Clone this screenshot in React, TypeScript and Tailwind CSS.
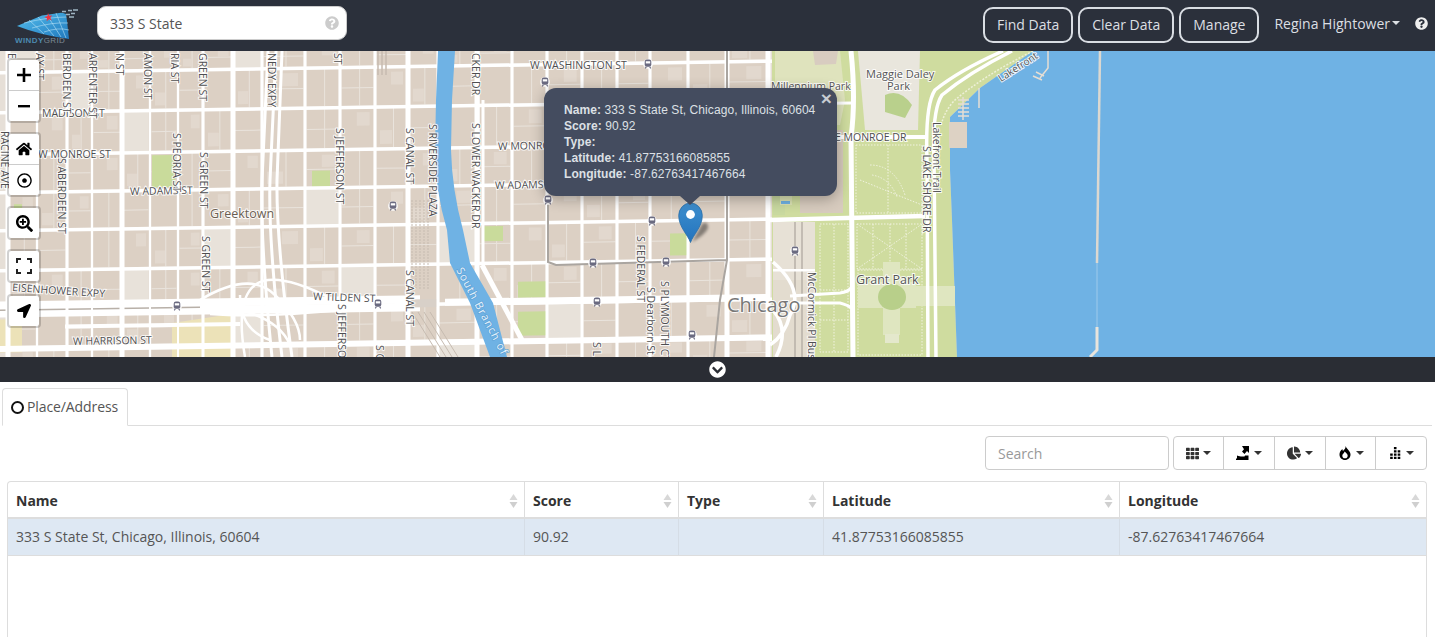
import React from "react";
import { FaHome, FaRegDotCircle, FaSearchPlus, FaLocationArrow, FaQuestionCircle, FaChevronCircleDown, FaTh, FaChartPie } from "react-icons/fa";

const xs = [8, 37, 67, 92, 122, 150, 178, 203, 233, 262, 305, 340, 375, 408, 438, 477, 512, 547, 582, 617, 650, 688, 727, 768];
const ys = [40, 65, 105, 147, 185, 223, 263, 303, 340, 372];
const majorV = [8, 122, 233, 408, 477, 727, 768];
const thinV = [37, 92, 150, 178];

const hash = (a: number, b: number) => ((a * 31 + b * 17 + a * b) % 97) / 97;

type L = [string, number, number, number?];
const hLabels: L[] = [
  ["W WASHINGTON ST", 530, 69],
  ["MADISON ST", 42, 117],
  ["W MONROE ST", 38, 158],
  ["W ADAMS ST", 130, 195, -1],
  ["W ADAMS", 495, 189, -1],
  ["W MONROE", 498, 150, -1],
  ["EISENHOWER EXPY", 12, 291, 4],
  ["W HARRISON ST", 73, 345, -1],
  ["W TILDEN ST", 313, 300, 2],
  ["E MONROE DR", 835, 141],
];
const vLabels: [string, number, number][] = [
  ["E", 12, 53], ["AY ST", 40, 53], ["BERDEEN ST", 67, 53], ["ARPENTER ST", 93, 53], ["N ST", 120, 53],
  ["AMON ST", 148, 53], ["RIA ST", 175, 53], ["GREEN ST", 203, 53], ["NEDY EXPY", 272, 53], ["ST", 338, 53],
  ["RACINE AVE", 5, 131], ["S PEORIA ST", 177, 133], ["S GREEN ST", 204, 152], ["S ABERDEEN ST", 62, 158], ["S GREEN ST", 206, 236],
  ["S JEFFERSON ST", 340, 128], ["S CANAL ST", 410, 128], ["S RIVERSIDE PLAZA", 433, 124], ["S LOWER WACKER DR", 476, 123], ["CKER DR", 476, 53],
  ["S CANAL ST", 410, 270], ["S JEFFERSO", 342, 304], ["S C", 380, 345], ["S FEDERAL ST", 641, 236], ["S Dearborn St", 651, 287],
  ["S PLYMOUTH CT", 665, 281], ["S L", 597, 342], ["S LAKE SHORE DR", 927, 146], ["Lakefront Trail", 937, 122], ["McCormick Pl Busw", 812, 272],
];
const stations = [[648, 64], [545, 82], [548, 200], [393, 206], [652, 221], [593, 263], [666, 262], [378, 304], [597, 302], [692, 335], [795, 251], [177, 306]];

function Station({ x, y }: { x: number; y: number }) {
  return (
    <g transform={`translate(${x} ${y}) scale(1.1)`}>
      <circle r="4.6" fill="#fff" opacity=".75" />
      <rect x="-3" y="-4" width="6" height="6.5" rx="2" fill="#6a6a80" />
      <rect x="-2" y="-2.5" width="4" height="2" fill="#fff" />
      <path d="M-2.5 4l1-1.5M2.5 4l-1-1.5" stroke="#6a6a80" strokeWidth="1" />
    </g>
  );
}

function CityMap() {
  return (
    <svg viewBox="0 51 1435 306" className="block w-[1435px] h-[306px]">
      <rect x="0" y="51" width="1435" height="306" fill="#e6dfd7" />
      {/* city blocks */}
      <g transform="matrix(1 -0.015 0 1 0 7.5)">
        {xs.slice(0, -1).map((x0, i) =>
          ys.slice(0, -1).map((y0, j) => {
            const x1 = xs[i + 1];
            const y1 = ys[j + 1];
            const h = hash(i + 3, j + 5);
            const w = x1 - x0 - 3;
            const ht = y1 - y0 - 3;
            return (
              <g key={`${i}-${j}`}>
                <rect x={x0 + 1.5} y={y0 + 1.5} width={w} height={ht} fill={h > 0.93 ? "#e8e2da" : "#dcd0c4"} />
                {h < 0.4 && <rect x={x0 + 1.5 + w * 0.55} y={y0 + 1.5} width={1} height={ht} fill="#e9e3dc" />}
                {h > 0.3 && h < 0.7 && <rect x={x0 + 1.5} y={y0 + 1.5 + ht * 0.5} width={w} height={1} fill="#e9e3dc" />}
                {h > 0.55 && h < 0.85 && <rect x={x0 + 4 + w * 0.4} y={y0 + 5} width={w * 0.4} height={ht * 0.35} fill="#e2d8ce" />}
                {h > 0.1 && h < 0.25 && <rect x={x0 + 5} y={y0 + 2 + ht * 0.55} width={w * 0.4} height={ht * 0.35} fill="#e2d8ce" />}
              </g>
            );
          })
        )}
        {/* yellow campus */}
        <path d="M0 312H22V345H0zM172 318L232 310L236 360H172z" fill="#ece2b8" />
        <path d="M152 150H175V182H152zM312 168H330V184H312zM14 197H22V203H14z" fill="#c9db9b" />
        <path d="M483 226H503V241H483zM518 282H547V298H518zM518 312H547V336H518zM670 236H688V258H670z" fill="#c9db9b" />
        {/* roads */}
        {ys.map((y) => (
          <rect key={y} x="0" y={y - 1.5} width="775" height={y === 340 ? 6 : 3.5} fill="#fff" />
        ))}
        {/* expressway */}
        <rect x="0" y="294" width="420" height="8" fill="#fff" />
        <rect x="0" y="304" width="420" height="6" fill="#fff" />
        <rect x="0" y="302" width="200" height="1.5" fill="#b8b0a8" />
        <rect x="65" y="318" width="175" height="4" fill="#fff" />
        <rect x="408" y="298" width="30" height="8" fill="#d8d0c8" />
        <rect x="445" y="298" width="325" height="7" fill="#fff" />
      </g>
      {xs.map((x) => (
        <rect
          key={x}
          x={x - (majorV.includes(x) ? 2.5 : thinV.includes(x) ? 1 : 1.5)}
          y="51"
          width={majorV.includes(x) ? 5 : thinV.includes(x) ? 2 : 3}
          height="306"
          fill="#fff"
        />
      ))}
      {/* Kennedy */}
      <path d="M268 51L262 180Q260 240 272 357M276 51L270 180Q268 240 282 357M282 51L277 180Q276 240 292 357" stroke="#fff" strokeWidth="3" fill="none" />
      {/* interchange */}
      <g stroke="#fff" strokeWidth="2.5" fill="none">
        <path d="M200 300Q250 270 275 295T300 340" />
        <path d="M245 357Q235 300 255 285T330 298" />
        <path d="M240 310Q280 320 290 345" />
        <path d="M240 295Q240 330 270 340" />
        <path d="M210 314Q260 318 340 310" />
      </g>
      {/* rail yard */}
      <g stroke="#c6bbb0" strokeWidth="1" fill="none">
        <path d="M412 200L412 290M416 200L416 290M420 200L420 290M424 200L424 290M428 200L428 290" strokeDasharray="2 1" />
        <path d="M412 312L440 357M418 312L446 357M424 312L452 357M430 312L458 357" />
        <path d="M378 51V75M382 51V75M386 51V75" strokeWidth="1.5" />
      </g>
      {/* river */}
      <path d="M438 51H455L452 100L451 150Q452 190 463 230L470 263L493 303L507 357H490L470 303L450 263L447 230Q435 190 435 150L436 100Z" fill="#6fb2e4" />
      <path d="M478 51V263M483 100V263" stroke="#fff" strokeWidth="3" fill="none" />
      <path d="M482 265L522 340" stroke="#fff" strokeWidth="5" fill="none" />
      {/* L tracks */}
      <path d="M548 200V262L556 265L727 260M727 51V260L720 300L714 357" stroke="#aaa5a0" strokeWidth="2" fill="none" />

      {/* park side */}
      <path d="M772 51H1033L980 88L950 117V170L952 220L957 357H772Z" fill="#cfdc9f" />
      <path d="M950 117L980 88L1033 51H1435V357H957L952 220L950 170Z" fill="#6fb2e4" />
      <path d="M775 51H840L845 100L840 125H775Z" fill="#dfe3bd" />
      <path d="M813 51H838L836 64L815 65Z" fill="#d8ccc0" />
      <path d="M858 51H920L918 130H865Z" fill="#e9e6dd" />
      <path d="M885 95Q900 88 912 105L905 118L885 112Z" fill="#b9d08c" />
      <path d="M800 130H843V213H800Z" fill="#d7cbbe" />
      <path d="M773 222H815V357H773Z" fill="#e3dccf" />
      <path d="M773 222H815V280H773Z" fill="#e7e1d6" />
      <path d="M773 150H785V215H773Z" fill="#c9d9a0" />
      <path d="M780 196H792V205H780z" fill="#dce3b5" />
      <rect x="781" y="201" width="9" height="3" fill="#6fb2e4" />
      <path d="M795 222V357M802 222V357" stroke="#b8b0a8" strokeWidth="1.5" />
      <rect x="773" y="269" width="42" height="2.5" fill="#fff" />
      <path d="M773 310Q790 330 776 357M773 262Q805 290 790 315Q785 335 770 345" stroke="#fff" strokeWidth="3.5" fill="none" />
      {/* dotted park paths */}
      <g stroke="#f1f3e0" strokeWidth="1" strokeDasharray="1.5 1.5" fill="none">
        <rect x="856" y="145" width="66" height="68" />
        <path d="M870 165Q895 165 905 195M872 175Q890 178 897 197M860 180L922 205M888 145V213" />
        <rect x="857" y="224" width="65" height="45" />
        <path d="M857 224L922 269M922 224L857 269M873 224V269M890 224V269M906 224V269" />
        <rect x="820" y="224" width="28" height="128" />
        <path d="M820 290H848M820 320H848M834 224V352" />
        <rect x="858" y="270" width="64" height="85" />
      </g>
      {/* grant park plaza */}
      <path d="M883 262H900V282H916V308H900V335H883V308H858V282H883Z" fill="#dfe6c0" />
      <path d="M915 286H955V306H915Z" fill="#dfe6c0" />
      <ellipse cx="892" cy="297" rx="14" ry="13" fill="#b8cf8a" />
      <rect x="885" y="334" width="14" height="9" fill="#e4e8cc" />
      {/* main roads east */}
      <path d="M769 220L925 216" stroke="#fff" strokeWidth="4.5" />
      <path d="M770 137H928" stroke="#fff" strokeWidth="4" />
      <path d="M770 105Q810 103 852 103" stroke="#fff" strokeWidth="3" fill="none" />
      <path d="M851 51Q856 100 851 137L853 357" stroke="#fff" strokeWidth="5" fill="none" />
      <path d="M790 296L840 293Q848 292 851 288M790 303H840Q848 305 851 308" stroke="#fff" strokeWidth="3" fill="none" />
      <path d="M1003 51Q960 70 935 90Q925 105 927 160L928 357" stroke="#fff" strokeWidth="3.5" fill="none" />
      <path d="M1012 51Q970 72 942 95Q932 110 934 160L936 357" stroke="#fff" strokeWidth="3.5" fill="none" />
      <path d="M1033 51Q985 75 955 100Q945 110 941 125" stroke="#eef0d8" strokeWidth="1.5" fill="none" strokeDasharray="2 1.5" />
      {/* harbor */}
      <rect x="949" y="122" width="18" height="26" fill="#ddd2c4" />
      <path d="M963 97V120M958 100H969M958 104H969M958 108H969M958 112H969M958 116H969M979 88V108M1048 51V68L1040 78M1033 76L1042 80M1036 72L1044 76" stroke="#e6ded4" strokeWidth="1.5" fill="none" />
      <path d="M1100 51L1097 263" stroke="#dcd8d0" strokeWidth="2.5" fill="none" />
      <path d="M1097 263V327" stroke="#9fcaeb" strokeWidth="1" fill="none" />
      <path d="M1097 327V350L1090 357" stroke="#e8e4dc" strokeWidth="3" fill="none" />

      {stations.map(([x, y]) => (
        <Station key={`${x}-${y}`} x={x} y={y} />
      ))}

      {/* labels */}
      <g fontFamily="'Open Sans', sans-serif" fontSize="10.5" fill="#4e4e50" stroke="#fff" strokeOpacity=".85" strokeWidth="2" paintOrder="stroke">
        {hLabels.map(([t, x, y, r]) => (
          <text key={t + x} x={x} y={y} transform={r ? `rotate(${r} ${x} ${y})` : undefined}>{t}</text>
        ))}
        {vLabels.map(([t, x, y]) => (
          <text key={t + x + y} transform={`translate(${x - 4} ${y}) rotate(90)`}>{t}</text>
        ))}
        <text x="210" y="218" fontSize="12.5" fill="#6b5e52">Greektown</text>
        <text x="856" y="284" fontSize="12.5" fill="#555">Grant Park</text>
        <text x="771" y="90" fontSize="10.5" fill="#555">Millennium Park</text>
        <text x="866" y="78" fontSize="11" fill="#555">Maggie Daley</text>
        <text x="887" y="90" fontSize="11" fill="#555">Park</text>
        <text x="727" y="312" fontSize="20" fill="#777">Chicago</text>
        <text transform="translate(1001 82) rotate(-33)" fontSize="10" fill="#555">Lakefront</text>
        <text transform="translate(456 270) rotate(62)" fontSize="11" fill="#e8f3fb" stroke="#5a9fd4" strokeWidth="1.5" letterSpacing="1">South Branch of</text>
      </g>
    </svg>
  );
}

function Marker() {
  return (
    <svg viewBox="0 0 60 42" className="w-[60px] h-[42px]">
      <defs>
        <linearGradient id="pin" x1="0" y1="0" x2="0" y2="1">
          <stop offset="0" stopColor="#3f8fce" />
          <stop offset="1" stopColor="#2273bd" />
        </linearGradient>
        <filter id="blur" x="-50%" y="-50%" width="200%" height="200%">
          <feGaussianBlur stdDeviation="1.6" />
        </filter>
      </defs>
      <path d="M14 40L24 22Q30 18 30 26Q28 32 14 40Z" fill="#000" opacity=".4" filter="url(#blur)" />
      <path d="M12.5 40.5C10 33 .7 25 .7 13.5A11.8 12.5 0 0 1 24.3 13.5C24.3 25 15 33 12.5 40.5Z" fill="url(#pin)" stroke="#2a6fa8" strokeWidth=".8" />
      <circle cx="12.5" cy="12.5" r="4.4" fill="#fff" />
    </svg>
  );
}

function Caret({ className = "" }: { className?: string }) {
  return <span className={`inline-block w-0 h-0 border-x-[4px] border-x-transparent border-t-[4px] ${className}`} />;
}

function Sort() {
  return (
    <svg viewBox="0 0 9 14" className="w-[9px] h-[14px] ml-auto shrink-0">
      <path d="M4.5 0L8.5 6H.5z" fill="#d8d8d8" />
      <path d="M4.5 14L.5 8h8z" fill="#cfcfcf" />
    </svg>
  );
}

function Logo() {
  return (
    <div className="w-[66px] h-[45px] ml-[15px] shrink-0 flex flex-col items-start">
      <svg viewBox="15 5 66 32" className="w-[66px] h-[32px] mt-[5px]">
        <defs>
          <linearGradient id="lg" x1="0" y1="0" x2="1" y2="1">
            <stop offset="0" stopColor="#55c0ee" />
            <stop offset="1" stopColor="#2078bd" />
          </linearGradient>
        </defs>
        <path d="M17 23L42 12.5L66 9L69 36Q40 32 17 23Z" fill="url(#lg)" />
        <g stroke="#bfe6f8" strokeWidth=".7" strokeOpacity=".8" fill="none">
          <path d="M24 20Q48 14 67 14M32 25Q52 19 68 20M44 29Q58 24 69 27" />
          <path d="M29 17L44 31M38 14L54 33M47 12L61 34M56 10L66 35" />
        </g>
        <path d="M60 9L78 7L74 17L67 16L66 11Z" fill="#2b303b" />
        <path d="M62 8.5H66M68 7.5H72M73 7H78M66 11.5H70M71 10.5H75M69 14H74" stroke="#9fb4c2" strokeWidth="1.4" />
        <path d="M48 10l1.2 2.8 3-.4-1.9 2.3 1.4 2.7-2.8-1.1-2.2 2 .3-3-2.7-1.4 3-.7z" fill="#ef3340" />
      </svg>
      <div className="text-[8px] leading-[8px] font-bold font-['Liberation_Sans',sans-serif] tracking-[.4px] text-[#4b8ab0] mt-[-3px] whitespace-nowrap">
        WINDY<span className="text-[#7d8b96] font-normal">GRID</span>
      </div>
    </div>
  );
}

function HeaderButton({ children }: { children: React.ReactNode }) {
  return (
    <button className="h-[36px] px-[12px] rounded-[10px] border-2 border-[#d9dde3] text-[14px] text-[#dcdfe3] leading-none">
      {children}
    </button>
  );
}

function Ctl({ children, divider }: { children: React.ReactNode; divider?: boolean }) {
  return (
    <div className={`w-[30px] h-[30px] flex items-center justify-center text-black ${divider ? "border-b border-[#ccc] box-content" : ""}`}>
      {children}
    </div>
  );
}

function Group({ children, className = "" }: { children: React.ReactNode; className?: string }) {
  return <div className={`bg-white rounded-[4px] border-2 border-[#0000002e] bg-clip-padding w-[34px] overflow-hidden ${className}`}>{children}</div>;
}

function ToolBtn({ children, w }: { children: React.ReactNode; w: string }) {
  return (
    <div className={`${w} h-full flex items-center justify-center gap-[4px] border-r border-[#ccc] last:border-r-0 text-[#333]`}>
      {children}
      <Caret className="border-t-[#333]" />
    </div>
  );
}

export default function App() {
  return (
    <div className="w-[1435px] h-[637px] overflow-hidden bg-white font-['Open_Sans',sans-serif] text-[14px] text-[#555]">
      <header className="h-[51px] bg-[#2b303b] flex items-center">
        <Logo />
        <div className="ml-[16px] w-[250px] h-[34px] mb-[5px] bg-white rounded-[9px] border border-[#ccc] flex items-center pl-[12px] pr-[7px]">
          <span className="text-[14px] text-[#555]">333 S State</span>
          <FaQuestionCircle className="ml-auto text-[#ccc] text-[14px]" />
        </div>
        <div className="ml-auto flex items-center gap-[5px] mb-[2px]">
          <HeaderButton>Find Data</HeaderButton>
          <HeaderButton>Clear Data</HeaderButton>
          <HeaderButton>Manage</HeaderButton>
        </div>
        <div className="ml-[15px] flex items-center gap-[2px] mb-[5px] text-[14px] text-[#dcdfe3]">
          Regina Hightower
          <Caret className="border-t-[#dcdfe3]" />
        </div>
        <FaQuestionCircle className="ml-[15px] mr-[7px] mb-[5px] text-[#eee] text-[13px]" />
      </header>

      <section className="relative h-[306px] overflow-hidden">
        <CityMap />
        <div className="absolute left-[7px] top-[7px] flex flex-col gap-[9px]">
          <Group>
            <Ctl divider>
              <svg viewBox="0 0 14 14" className="w-[14px] h-[14px]"><path d="M5.7 0h2.6v5.7H14v2.6H8.3V14H5.7V8.3H0V5.7h5.7z" /></svg>
            </Ctl>
            <Ctl>
              <svg viewBox="0 0 12 3" className="w-[12px] h-[3px]"><rect width="12" height="2.4" /></svg>
            </Ctl>
          </Group>
          <Group>
            <Ctl divider><FaHome className="text-[16px]" /></Ctl>
            <Ctl><FaRegDotCircle className="text-[15px]" /></Ctl>
          </Group>
          <Group>
            <Ctl><FaSearchPlus className="text-[17px]" /></Ctl>
          </Group>
          <Group>
            <Ctl>
              <svg viewBox="0 0 16 16" className="w-[16px] h-[16px]"><path d="M1 5V1h4M11 1h4v4M15 11v4h-4M5 15H1v-4" fill="none" stroke="#222" strokeWidth="2" /></svg>
            </Ctl>
          </Group>
          <Group className="mt-[2px]">
            <Ctl><FaLocationArrow className="text-[14px]" /></Ctl>
          </Group>
        </div>

        <div className="absolute left-[678px] top-[151px]">
          <Marker />
        </div>

        <div className="absolute left-[544px] top-[37px] w-[293px] h-[108px] rounded-[12px] bg-[#444c5f] shadow-[0_3px_14px_rgba(0,0,0,0.3)] pl-[20px] pt-[14px] font-['Liberation_Sans',sans-serif] text-[12px] leading-[16px] tracking-[0.07px] text-[#dde0e5] whitespace-nowrap">
          <div><b>Name:</b> 333 S State St, Chicago, Illinois, 60604</div>
          <div><b>Score:</b> 90.92</div>
          <div><b>Type:</b></div>
          <div><b>Latitude:</b> 41.87753166085855</div>
          <div><b>Longitude:</b> -87.62763417467664</div>
          <span className="absolute right-[5px] top-[3px] text-[19px] leading-[16px] font-bold text-[#c8ccd2]">×</span>
          <span className="absolute left-[136px] top-[108px] w-0 h-0 border-x-[10px] border-x-transparent border-t-[9px] border-t-[#444c5f]" />
        </div>
      </section>

      <div className="h-[25px] bg-[#2a2d34] flex items-center justify-center">
        <FaChevronCircleDown className="text-white text-[17px] ml-[-1px]" />
      </div>

      <div className="h-[44px] pt-[6px] pl-[2px] pr-[3px]">
        <div className="border-b border-[#ddd] h-[38px]">
          <div className="w-[126px] h-[38px] border border-[#ddd] border-b-white bg-white rounded-t-[4px] flex items-center pl-[8px] gap-[3px]">
            <span className="w-[13px] h-[13px] rounded-full border-2 border-[#111] shrink-0" />
            <span className="text-[14px] text-[#555] leading-none tracking-[-0.1px]">Place/Address</span>
          </div>
        </div>
      </div>

      <div className="flex justify-end gap-[4px] pr-[8px] mt-[10px] h-[34px]">
        <div className="w-[184px] h-[34px] border border-[#ccc] rounded-[4px] flex items-center pl-[12px] text-[14px] text-[#999]">Search</div>
        <div className="h-[34px] w-[254px] border border-[#ccc] rounded-[4px] flex items-center">
          <ToolBtn w="w-[50px]"><FaTh className="text-[13px]" /></ToolBtn>
          <ToolBtn w="w-[51px]">
            <svg viewBox="0 0 14 14" className="w-[14px] h-[14px]"><path d="M6 0h7v7l-2-2-2.5 3L6 5.5 8 3.2z" /><path d="M1 9.5c2 .8 3.5 1 5 1h2.5L9 9.5h3.5V14H0v-1.5h1z" /></svg>
          </ToolBtn>
          <ToolBtn w="w-[51px]"><FaChartPie className="text-[14px]" /></ToolBtn>
          <ToolBtn w="w-[50px]">
            <svg viewBox="0 0 14 14" className="w-[14px] h-[14px]"><path fillRule="evenodd" d="M7.500 0C8 2.500 6 3.500 5 5 4.600 4.200 4.400 3.700 4.400 3 2.500 4.500 1.500 6.500 1.500 8.500 1.500 11.700 4 14 7 14s5.500-2.300 5.500-5.500C12.500 5 9 3.500 7.500 0ZM7 12.300c-1.500 0-2.700-1-2.700-2.600 0-1.700 1.700-2.400 2.400-4.200 1.200 1.600 3 2.500 3 4.200 0 1.600-1.200 2.600-2.700 2.600Z" /></svg>
          </ToolBtn>
          <ToolBtn w="flex-1">
            <svg viewBox="0 0 13 13" className="w-[14px] h-[14px]"><path d="M5.500 1h2.400v2H5.500zM5.500 4h2.400v2H5.500zM9 4h2.400v2H9zM2 7h2.400v2H2zM5.500 7h2.400v2H5.500zM9 7h2.400v2H9zM2 10h2.400v2H2zM5.500 10h2.400v2H5.500zM9 10h2.400v2H9z" /></svg>
          </ToolBtn>
        </div>
      </div>

      <div className="mt-[11px] ml-[7px] w-[1420px] h-[160px] border border-b-0 border-[#ddd] rounded-t-[4px]">
        <div className="grid grid-cols-[517px_154px_145px_296px_1fr] h-[37px] pt-[2px] border-b-2 border-[#ddd] font-bold text-[#333] text-[14px]">
          {["Name", "Score", "Type", "Latitude", "Longitude"].map((h) => (
            <div key={h} className="flex items-center px-[8px] border-r border-[#ddd] last:border-r-0 pr-[6px] mt-[-2px] pt-[2px]">
              {h}
              <Sort />
            </div>
          ))}
        </div>
        <div className="grid grid-cols-[517px_154px_145px_296px_1fr] h-[37px] bg-[#dee8f3] border-b border-[#ddd] text-[#555] text-[14px]">
          {["333 S State St, Chicago, Illinois, 60604", "90.92", "", "41.87753166085855", "-87.62763417467664"].map((c, i) => (
            <div key={i} className="flex items-center px-[8px] pb-[2px] border-r border-[#d5dde6] last:border-r-0">{c}</div>
          ))}
        </div>
      </div>
    </div>
  );
}
